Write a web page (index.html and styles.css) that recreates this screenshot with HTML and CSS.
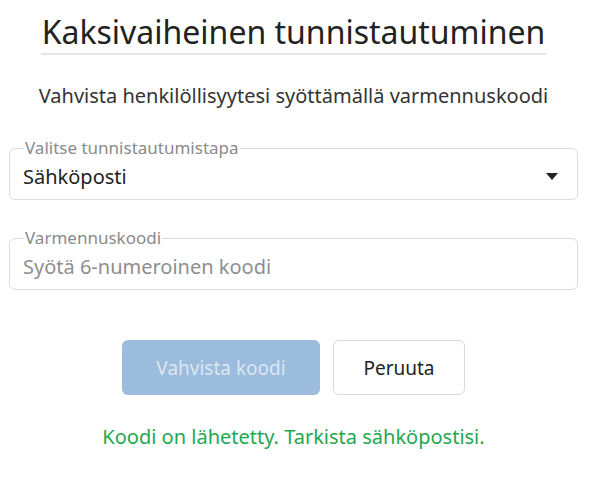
FILE: index.html
```html
<!DOCTYPE html>
<html lang="fi">
<head>
<meta charset="utf-8">
<link rel="stylesheet" href="styles.css">
</head>
<body>
<main class="card">
  <h1 class="title">Kaksivaiheinen tunnistautuminen</h1>
  <p class="lead">Vahvista henkilöllisyytesi syöttämällä varmennuskoodi</p>
  <fieldset class="field">
    <legend class="field-label">Valitse tunnistautumistapa</legend>
    <div class="select-row">
      <span class="value">Sähköposti</span>
      <svg class="caret" width="12" height="7" viewBox="0 0 12 7"><path d="M0 0h12L6 7z" fill="#222"/></svg>
    </div>
  </fieldset>
  <fieldset class="field">
    <legend class="field-label">Varmennuskoodi</legend>
    <div class="select-row">
      <span class="placeholder">Syötä 6-numeroinen koodi</span>
    </div>
  </fieldset>
  <div class="actions">
    <button class="btn btn-primary" disabled>Vahvista koodi</button>
    <button class="btn btn-secondary">Peruuta</button>
  </div>
  <p class="success">Koodi on lähetetty. Tarkista sähköpostisi.</p>
</main>
</body>
</html>
```
FILE: styles.css
```css
* { box-sizing: border-box; }
html, body { margin: 0; background: #fff; }
body {
  font-family: "Noto Sans", "Open Sans", sans-serif;
  color: #222;
}
.card {
  width: 569px;
  margin-left: 9px;
  padding-top: 13px;
  display: flex;
  flex-direction: column;
  align-items: stretch;
}
.title {
  align-self: center;
  margin: 0;
  font-weight: 400;
  font-size: 32px;
  line-height: 38px;
  padding: 0 1px 2px;
  border-bottom: 2px solid #e6e6ea;
  color: #222;
}
.lead {
  text-align: center;
  margin: 28px 0 0;
  font-size: 20px;
  line-height: 26px;
  color: #333;
}
.field {
  margin: 0;
  border: 1px solid #dcdcdc;
  border-radius: 6px;
  padding: 0 13px 8px;
  min-width: 0;
}
.field:first-of-type { margin-top: 31px; }
.field + .field { margin-top: 30px; }
.field-label {
  padding: 0 1px;
  margin-left: 1px;
  font-size: 17px;
  line-height: 16px;
  color: #8a8a8a;
}
.select-row {
  display: flex;
  align-items: center;
  justify-content: space-between;
  height: 35px;
  padding-top: 5px;
}
.value { font-size: 20px; color: #222; }
.placeholder { font-size: 20px; color: #8e8e8e; }
.caret { margin-right: 6px; }
.actions {
  display: flex;
  justify-content: center;
  gap: 13px;
  margin-top: 50px;
}
.btn {
  font-family: inherit;
  font-size: 19px;
  height: 55px;
  border-radius: 6px;
  padding: 0 18px;
}
.btn-primary {
  width: 198px;
  background: #9bbcdc;
  border: none;
  color: #dbe7f2;
}
.btn-secondary {
  width: 132px;
  background: #fff;
  border: 1px solid #d9d9d9;
  color: #222;
}
.success {
  margin: 30px 0 0;
  text-align: center;
  font-size: 20px;
  line-height: 24px;
  color: #1fa84f;
}
```
